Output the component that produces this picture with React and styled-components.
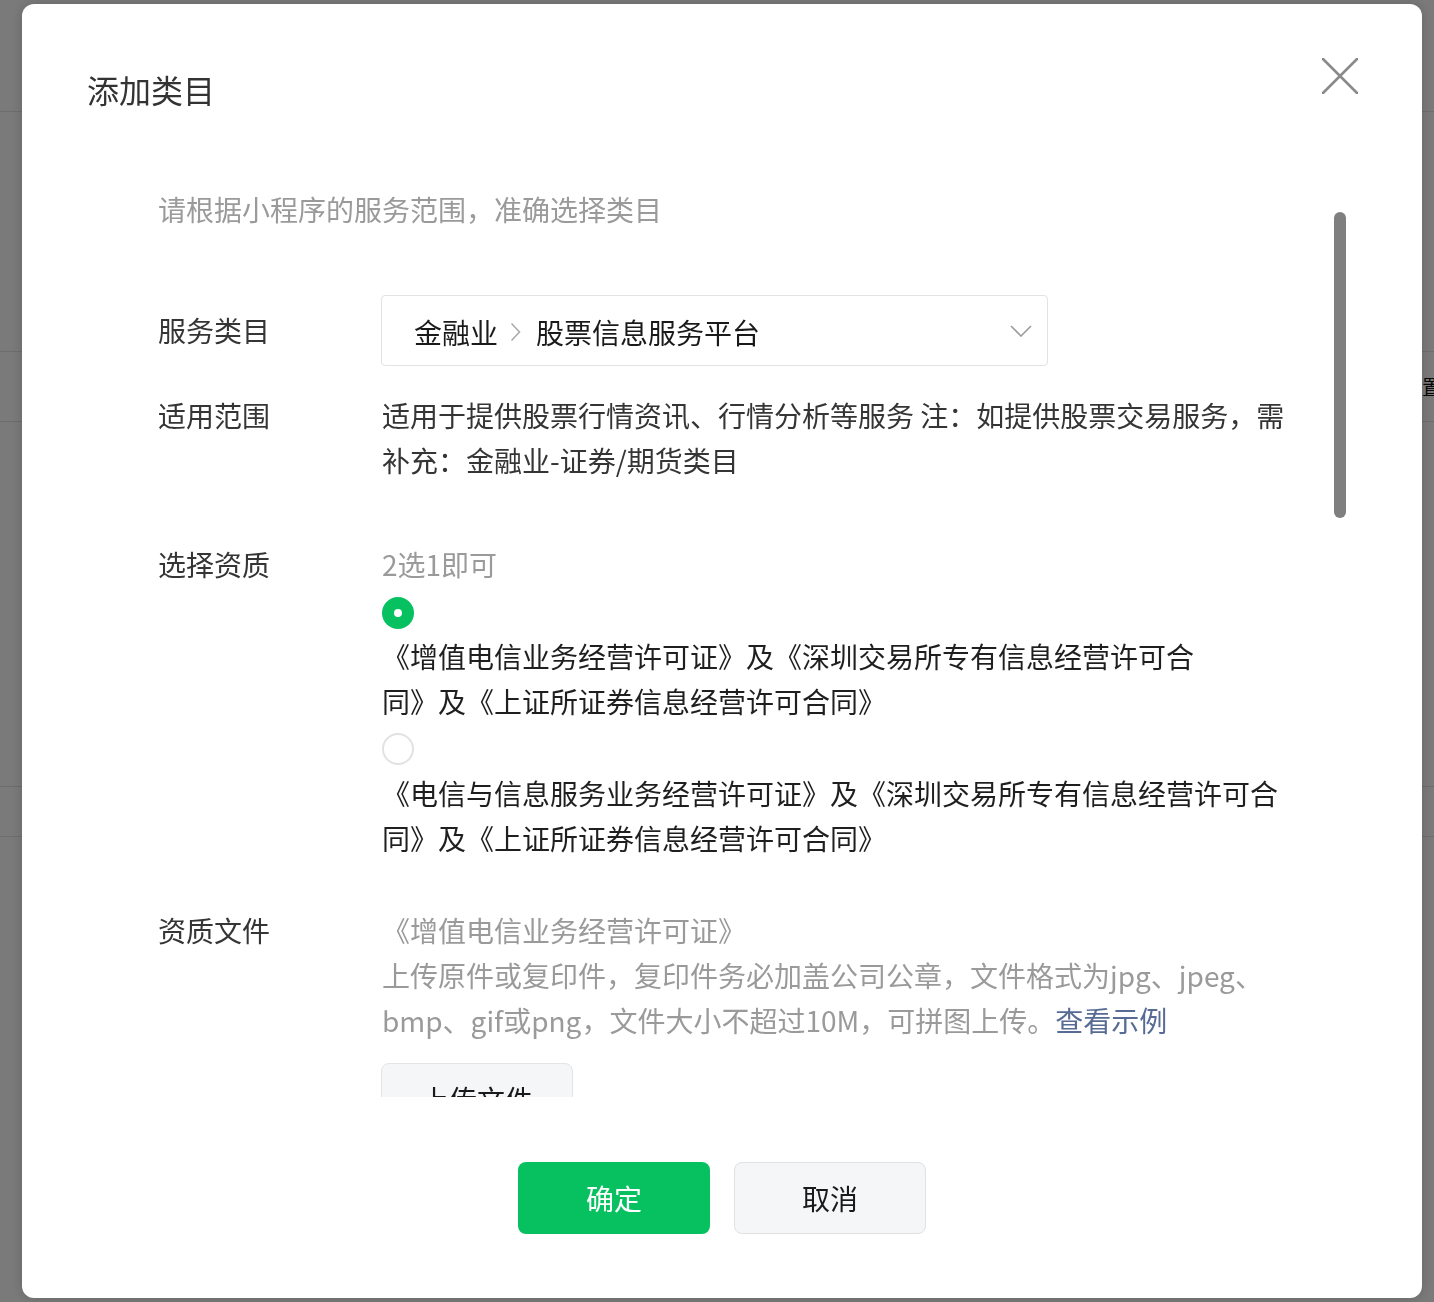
import React from "react";
import styled, { createGlobalStyle } from "styled-components";

const Global = createGlobalStyle`
  html, body { margin: 0; padding: 0; }
  body {
    font-family: "Noto Sans CJK SC", "Noto Sans", sans-serif;
    background: #ffffff;
    overflow: hidden;
  }
  * { box-sizing: border-box; }
`;

const Page = styled.div`
  width: 1434px;
  height: 1302px;
  background: #ffffff;
  display: flex;
  flex-direction: column;
`;

const PageRow = styled.div`
  height: ${(p) => p.$h}px;
  flex-shrink: 0;
  border-bottom: 1px solid #e4e4e4;
  display: flex;
  align-items: center;
  padding-left: 1402px;
  white-space: nowrap;
  overflow: hidden;
  font-size: 20px;
  color: #111;
`;

const Overlay = styled.div`
  position: fixed;
  inset: 0;
  background: rgba(0, 0, 0, 0.52);
  padding: 4px 12px 4px 22px;
  display: flex;
`;

const Modal = styled.div`
  flex: 1;
  background: #ffffff;
  border-radius: 12px;
  display: flex;
  flex-direction: column;
  position: relative;
  box-shadow: 0 0 14px rgba(0, 0, 0, 0.18);
`;

const Header = styled.div`
  display: flex;
  justify-content: space-between;
  align-items: flex-start;
  padding: 54px 64px 0 65px;
`;

const Title = styled.h2`
  margin: 8px 0 2px;
  font-size: 32px;
  line-height: 46px;
  font-weight: 400;
  color: #333333;
`;

const CloseButton = styled.button`
  width: 36px;
  height: 36px;
  padding: 0;
  border: none;
  background: transparent;
  display: flex;
  cursor: pointer;
`;

const Body = styled.div`
  flex: 1;
  overflow: hidden;
  padding: 73px 0 0 136px;
`;

const Hint = styled.p`
  margin: 0;
  font-size: 28px;
  line-height: 45px;
  color: #9a9a9a;
`;

const Form = styled.div`
  margin-top: 63px;
  display: flex;
  flex-direction: column;
`;

const Row = styled.div`
  display: grid;
  grid-template-columns: 224px 910px;
  margin-bottom: ${(p) => p.$mb || 0}px;
`;

const Label = styled.div`
  font-size: 28px;
  line-height: ${(p) => p.$lh || 45}px;
  color: #353535;
`;

const Select = styled.div`
  width: 667px;
  height: 71px;
  margin-left: -1px;
  border: 1px solid #e1e3e7;
  border-radius: 4px;
  display: flex;
  align-items: center;
  padding: 3px 15px 0 32px;
  font-size: 28px;
  color: #1a1a1a;
`;

const SelectValue = styled.div`
  flex: 1;
  display: flex;
  align-items: center;
  line-height: 45px;
`;

const Separator = styled.svg`
  width: 11px;
  height: 20px;
  margin: 0 15px 0 12px;
`;

const Chevron = styled.svg`
  width: 22px;
  height: 12px;
  margin-top: -3px;
`;

const Text = styled.div`
  font-size: 28px;
  line-height: 45px;
  color: ${(p) => p.$color || "#1f1f1f"};
`;

const Link = styled.a`
  color: #576b95;
  text-decoration: none;
`;

const Radio = styled.span`
  display: block;
  width: 32px;
  height: 32px;
  border-radius: 50%;
  margin-top: ${(p) => p.$mt}px;
  margin-bottom: ${(p) => p.$mb}px;
  background: ${(p) => (p.$checked ? "#07c160" : "#ffffff")};
  border: ${(p) => (p.$checked ? "none" : "2px solid #e2e2e2")};
  display: flex;
  align-items: center;
  justify-content: center;
  &::after {
    content: "";
    display: ${(p) => (p.$checked ? "block" : "none")};
    width: 8px;
    height: 8px;
    border-radius: 50%;
    background: #ffffff;
  }
`;

const UploadButton = styled.button`
  margin-top: 20px;
  margin-left: -1px;
  width: 192px;
  height: 72px;
  border: 1px solid #e3e4e6;
  border-radius: 8px;
  background: #f5f6f7;
  font-family: inherit;
  font-size: 28px;
  color: #1a1a1a;
  padding: 0;
`;

const Thumb = styled.div`
  position: absolute;
  left: 1312px;
  top: 208px;
  width: 12px;
  height: 306px;
  border-radius: 6px;
  background: #7f7f7f;
`;

const Footer = styled.div`
  padding: 65px 0 64px;
  display: flex;
  justify-content: center;
  gap: 24px;
`;

const Button = styled.button`
  width: 192px;
  height: 72px;
  border-radius: 8px;
  font-family: inherit;
  font-size: 28px;
  padding: 0;
  cursor: pointer;
  background: ${(p) => (p.$primary ? "#07c160" : "#f5f6f7")};
  color: ${(p) => (p.$primary ? "#ffffff" : "#1a1a1a")};
  border: ${(p) => (p.$primary ? "none" : "1px solid #e0e1e3")};
`;

export default function App() {
  return (
    <>
      <Global />
      <Page>
        <PageRow $h={112} />
        <PageRow $h={240} />
        <PageRow $h={70}>设置</PageRow>
        <PageRow $h={365} />
        <PageRow $h={50} />
      </Page>
      <Overlay>
        <Modal>
          <Header>
            <Title>添加类目</Title>
            <CloseButton aria-label="关闭">
              <svg width="36" height="36" viewBox="0 0 36 36">
                <path
                  d="M1 1 L35 35 M35 1 L1 35"
                  stroke="#8a8a8a"
                  strokeWidth="2.6"
                  strokeLinecap="round"
                />
              </svg>
            </CloseButton>
          </Header>
          <Body>
            <Hint>请根据小程序的服务范围，准确选择类目</Hint>
            <Form>
              <Row $mb={27}>
                <Label $lh={71}>服务类目</Label>
                <Select>
                  <SelectValue>
                    金融业
                    <Separator viewBox="0 0 11 20">
                      <path
                        d="M1.5 1.5 L9.5 10 L1.5 18.5"
                        fill="none"
                        stroke="#ababab"
                        strokeWidth="1.6"
                      />
                    </Separator>
                    股票信息服务平台
                  </SelectValue>
                  <Chevron viewBox="0 0 22 12">
                    <path
                      d="M1 1 L11 11 L21 1"
                      fill="none"
                      stroke="#9c9c9c"
                      strokeWidth="1.6"
                    />
                  </Chevron>
                </Select>
              </Row>
              <Row $mb={59}>
                <Label>适用范围</Label>
                <Text $color="#353535">
                  适用于提供股票行情资讯、行情分析等服务 注：如提供股票交易服务，需补充：金融业-证券/期货类目
                </Text>
              </Row>
              <Row $mb={47}>
                <Label>选择资质</Label>
                <div>
                  <Text $color="#9a9a9a">2选1即可</Text>
                  <Radio $checked $mt={10} $mb={5} />
                  <Text>
                    《增值电信业务经营许可证》及《深圳交易所专有信息经营许可合
                    <br />
                    同》及《上证所证券信息经营许可合同》
                  </Text>
                  <Radio $mt={9} $mb={6} />
                  <Text>
                    《电信与信息服务业务经营许可证》及《深圳交易所专有信息经营许可合同》及《上证所证券信息经营许可合同》
                  </Text>
                </div>
              </Row>
              <Row>
                <Label>资质文件</Label>
                <div>
                  <Text $color="#9a9a9a">
                    《增值电信业务经营许可证》
                    <br />
                    上传原件或复印件，复印件务必加盖公司公章，文件格式为jpg、jpeg、
                    <br />
                    bmp、gif或png，文件大小不超过10M，可拼图上传。
                    <Link href="#">查看示例</Link>
                  </Text>
                  <UploadButton>上传文件</UploadButton>
                </div>
              </Row>
            </Form>
          </Body>
          <Thumb />
          <Footer>
            <Button $primary>确定</Button>
            <Button>取消</Button>
          </Footer>
        </Modal>
      </Overlay>
    </>
  );
}
